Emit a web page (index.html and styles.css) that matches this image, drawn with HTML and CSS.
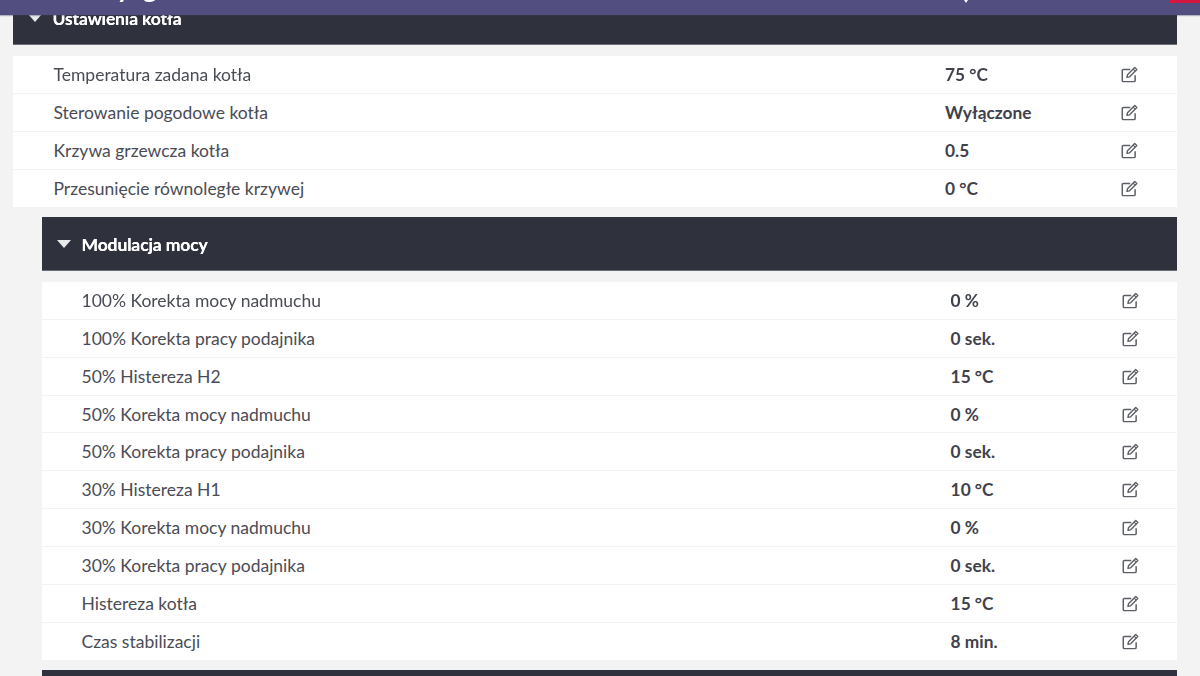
FILE: index.html
```html
<!DOCTYPE html>
<html lang="pl">
<head>
<meta charset="utf-8">
<title>Ustawienia kotła</title>
<link rel="stylesheet" href="styles.css">
</head>
<body>
<header class="topbar">
  <span class="topbar-title">Parametry główne</span>
  <span class="topbar-caret"></span>
  <span class="topbar-alert"></span>
</header>
<main class="page">
  <section class="panel">
    <h2 class="panel-head"><span class="tri"></span>Ustawienia kotła</h2>
    <div class="rows">
      <div class="row"><span class="label">Temperatura zadana kotła</span><span class="value">75 °C</span><svg class="edit" viewBox="0 0 16 16"><use href="#pen"/></svg></div>
      <div class="row"><span class="label">Sterowanie pogodowe kotła</span><span class="value">Wyłączone</span><svg class="edit" viewBox="0 0 16 16"><use href="#pen"/></svg></div>
      <div class="row"><span class="label">Krzywa grzewcza kotła</span><span class="value">0.5</span><svg class="edit" viewBox="0 0 16 16"><use href="#pen"/></svg></div>
      <div class="row"><span class="label">Przesunięcie równoległe krzywej</span><span class="value">0 °C</span><svg class="edit" viewBox="0 0 16 16"><use href="#pen"/></svg></div>
    </div>
    <section class="panel sub">
      <h2 class="panel-head"><span class="tri"></span>Modulacja mocy</h2>
      <div class="rows">
        <div class="row"><span class="label">100% Korekta mocy nadmuchu</span><span class="value">0 %</span><svg class="edit" viewBox="0 0 16 16"><use href="#pen"/></svg></div>
        <div class="row"><span class="label">100% Korekta pracy podajnika</span><span class="value">0 sek.</span><svg class="edit" viewBox="0 0 16 16"><use href="#pen"/></svg></div>
        <div class="row"><span class="label">50% Histereza H2</span><span class="value">15 °C</span><svg class="edit" viewBox="0 0 16 16"><use href="#pen"/></svg></div>
        <div class="row"><span class="label">50% Korekta mocy nadmuchu</span><span class="value">0 %</span><svg class="edit" viewBox="0 0 16 16"><use href="#pen"/></svg></div>
        <div class="row"><span class="label">50% Korekta pracy podajnika</span><span class="value">0 sek.</span><svg class="edit" viewBox="0 0 16 16"><use href="#pen"/></svg></div>
        <div class="row"><span class="label">30% Histereza H1</span><span class="value">10 °C</span><svg class="edit" viewBox="0 0 16 16"><use href="#pen"/></svg></div>
        <div class="row"><span class="label">30% Korekta mocy nadmuchu</span><span class="value">0 %</span><svg class="edit" viewBox="0 0 16 16"><use href="#pen"/></svg></div>
        <div class="row"><span class="label">30% Korekta pracy podajnika</span><span class="value">0 sek.</span><svg class="edit" viewBox="0 0 16 16"><use href="#pen"/></svg></div>
        <div class="row"><span class="label">Histereza kotła</span><span class="value">15 °C</span><svg class="edit" viewBox="0 0 16 16"><use href="#pen"/></svg></div>
        <div class="row"><span class="label">Czas stabilizacji</span><span class="value">8 min.</span><svg class="edit" viewBox="0 0 16 16"><use href="#pen"/></svg></div>
      </div>
    </section>
    <section class="panel sub">
      <div class="panel-head"></div>
    </section>
  </section>
</main>
<svg class="defs" width="0" height="0">
  <symbol id="pen" viewBox="0 0 16 16">
    <path d="M13.3 8.6v5a1.1 1.1 0 0 1-1.1 1.1H2.3a1.1 1.1 0 0 1-1.1-1.1V4.3a1.1 1.1 0 0 1 1.1-1.1h6.4" fill="none" stroke="currentColor" stroke-width="1.4"/>
    <path d="M5.6 10.7l.5-2.5L12.9 1.4l2 2-6.8 6.8z" fill="none" stroke="currentColor" stroke-width="1.3" stroke-linejoin="round"/>
    <path d="M11.4 2.9l2 2" fill="none" stroke="currentColor" stroke-width="1"/>
  </symbol>
</svg>
</body>
</html>
```
FILE: styles.css
```css
* { box-sizing: border-box; }
html, body { margin: 0; height: 676px; overflow: hidden; }
body {
  background: #f3f3f3;
  font-family: Lato, "Noto Sans", sans-serif;
  color: #4a4c55;
  font-size: 17.5px;
}
.topbar {
  position: absolute;
  top: 0; left: 0; right: 0;
  height: 15px;
  background: #524f80;
  overflow: hidden;
  z-index: 2;
  box-shadow: 0 1px 1px rgba(60,60,90,.35);
  filter: blur(.4px);
}
.topbar-title {
  position: absolute;
  left: 6px; top: -24px;
  color: #fff;
  font-size: 27px;
  font-weight: 700;
  line-height: 24px;
  white-space: nowrap;
  word-spacing: 6px;
}
.topbar-caret {
  position: absolute;
  left: 964px; top: 0;
  border: 2.5px solid transparent;
  border-top: 3px solid #fff;
  border-bottom: 0;
}
.topbar-alert {
  position: absolute;
  right: 0; top: 0;
  width: 30px; height: 3px;
  background: #d3173f;
}
.page { padding: 0 23px 0 13px; margin-top: -9px; filter: blur(.4px); }
.panel-head {
  margin: 0;
  height: 53.6px;
  background: #2f323c;
  color: #fff;
  font-size: 17.5px;
  font-weight: 700;
  letter-spacing: -.12px;
  display: flex;
  align-items: center;
  padding: 3px 0 0 15px;
  border-bottom: 1px solid #6b6d78;
  text-shadow: 0 0 .6px #fff;
}
.tri {
  width: 0; height: 0;
  margin: -2px 10.5px 0 0;
  border-left: 7.5px solid transparent;
  border-right: 7.5px solid transparent;
  border-top: 8px solid #e9e9ec;
}
.rows { margin-top: 11.4px; display: flex; flex-direction: column; gap: 1px; }
.row {
  height: 36.9px;
  background: #fff;
  display: flex;
  align-items: center;
  padding-left: 40.5px;
}
.label { flex: 1; }
.value {
  width: 176px;
  font-size: 17.3px;
  font-weight: 700;
  color: #3f414b;
}
.edit {
  width: 17px; height: 17px;
  margin-right: 39px;
  color: #5d5f66;
}
.sub { margin: 10.4px 0 0 29px; }
.sub .row { padding-left: 39.5px; }
.sub .value { width: 171.4px; }
.sub .edit { margin-right: 38px; }
.defs { position: absolute; }
```
